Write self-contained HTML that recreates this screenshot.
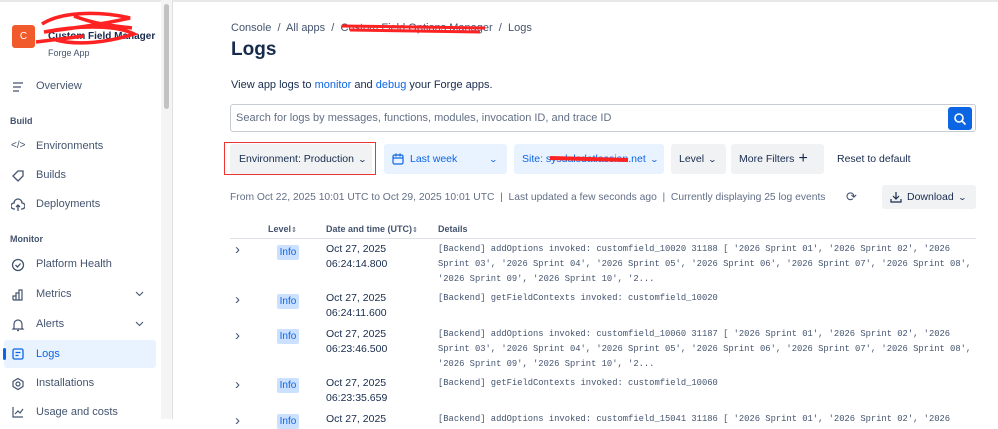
<!DOCTYPE html>
<html><head><meta charset="utf-8"><style>
*{box-sizing:border-box;margin:0;padding:0}
body{width:998px;height:419px;overflow:hidden;background:#fff;font-family:"Liberation Sans",sans-serif;color:#172b4d;position:relative;font-size:12px}
.a{position:absolute;white-space:nowrap}
.nav{left:36px;font-size:11px;color:#44546f}
.ic{left:11px;width:14px;height:14px}
.sec{left:10px;font-size:9px;font-weight:bold;color:#44546f}
.btn{position:absolute;top:144px;height:30px;border-radius:3px;background:#f1f2f4;font-size:10.5px;color:#172b4d;display:flex;align-items:center;padding:0 8px;white-space:nowrap}
.blue{background:#e9f2ff;color:#0c66e4}
.mono{font-family:"Liberation Mono",monospace;font-size:8.8px;color:#44546f;line-height:15px;left:438px;white-space:pre}
.info{position:absolute;left:277px;width:22px;height:15px;background:#cce0ff;color:#0c66e4;font-size:10px;text-align:center;line-height:15px;border-radius:2px}
.dt{left:326px;font-size:10.5px;color:#172b4d;line-height:15px}
.chev{left:235px;font-size:15px;color:#44546f;line-height:12px}
.cv{font-size:8px;margin-left:5px;display:inline-block;transform:scaleX(1.4)}
</style></head><body>
<div class="a" style="left:0;top:0;width:998px;height:2px;background:#e8e8e8"></div>
<!-- sidebar -->
<div class="a" style="left:12px;top:25px;width:23px;height:23px;background:#f15b2c;border-radius:3px;color:#fff;font-size:10px;text-align:center;line-height:23px">C</div>
<div class="a" style="left:48px;top:31px;font-size:10px;font-weight:bold;color:#172b4d">Custom Field Manager</div>
<div class="a" style="left:48px;top:48px;font-size:9px;color:#44546f">Forge App</div>
<svg class="a" style="left:34px;top:6px" width="110" height="44"><path d="M8 18 C30 4,70 6,96 12 C70 18,40 22,10 26 C40 20,80 18,100 28 C75 36,45 40,22 34 M2 36 L50 30 M40 10 C60 18,80 20,98 22" stroke="#f22" stroke-width="3.5" fill="none"/></svg>
<svg class="a ic" style="top:80px" viewBox="0 0 14 14"><path d="M2 3h10M2 7h8M2 11h6" stroke="#44546f" stroke-width="1.3"/></svg>
<div class="a nav" style="top:80px">Overview</div>
<div class="a sec" style="top:116px">Build</div>
<div class="a ic" style="top:140px;font-size:10px;color:#44546f">&lt;/&gt;</div>
<div class="a nav" style="top:140px">Environments</div>
<svg class="a ic" style="top:169px" viewBox="0 0 14 14"><path d="M2 7l5-5h5v5l-5 5z" stroke="#44546f" stroke-width="1.3" fill="none"/></svg>
<div class="a nav" style="top:169px">Builds</div>
<svg class="a ic" style="top:198px" viewBox="0 0 14 14"><path d="M4 11H3a3 3 0 010-6 4 4 0 018 0 3 3 0 010 6h-1M7 13V7M5 9l2-2 2 2" stroke="#44546f" stroke-width="1.3" fill="none"/></svg>
<div class="a nav" style="top:198px">Deployments</div>
<div class="a sec" style="top:234px">Monitor</div>
<svg class="a ic" style="top:258px" viewBox="0 0 14 14"><circle cx="7" cy="7" r="5.5" stroke="#44546f" stroke-width="1.3" fill="none"/><path d="M4.5 7l2 2 3-3.5" stroke="#44546f" stroke-width="1.3" fill="none"/></svg>
<div class="a nav" style="top:258px">Platform Health</div>
<svg class="a ic" style="top:288px" viewBox="0 0 14 14"><path d="M2 12V8h3v4M5 12V5h3v7M8 12V2h3v10H2" stroke="#44546f" stroke-width="1.2" fill="none"/></svg>
<div class="a nav" style="top:288px">Metrics</div>
<svg class="a" style="left:135px;top:291px" width="9" height="6"><path d="M1 1l3.5 3.5L8 1" stroke="#44546f" stroke-width="1.1" fill="none"/></svg>
<svg class="a ic" style="top:318px" viewBox="0 0 14 14"><path d="M3 10V6a4 4 0 018 0v4l1 1H2zM6 12.5h2" stroke="#44546f" stroke-width="1.2" fill="none"/></svg>
<div class="a nav" style="top:318px">Alerts</div>
<svg class="a" style="left:135px;top:321px" width="9" height="6"><path d="M1 1l3.5 3.5L8 1" stroke="#44546f" stroke-width="1.1" fill="none"/></svg>
<div class="a" style="left:4px;top:340px;width:152px;height:28px;background:#e9f2ff;border-radius:3px"></div>
<div class="a" style="left:3px;top:348px;width:3px;height:12px;background:#0c66e4;border-radius:2px"></div>
<svg class="a ic" style="top:347px" viewBox="0 0 14 14"><rect x="2" y="2" width="10" height="10" rx="1.5" stroke="#0c66e4" stroke-width="1.3" fill="none"/><path d="M4.5 5.5h5M4.5 8.5h3" stroke="#0c66e4" stroke-width="1.2"/></svg>
<div class="a nav" style="top:348px;color:#0c66e4">Logs</div>
<svg class="a ic" style="top:377px" viewBox="0 0 14 14"><path d="M7 1.5l5 3v5l-5 3-5-3v-5z" stroke="#44546f" stroke-width="1.2" fill="none"/><circle cx="7" cy="7" r="2" stroke="#44546f" stroke-width="1.2" fill="none"/></svg>
<div class="a nav" style="top:377px">Installations</div>
<svg class="a ic" style="top:405px" viewBox="0 0 14 14"><path d="M2 2v10h10M4 9l3-3 2 2 3-4" stroke="#44546f" stroke-width="1.2" fill="none"/></svg>
<div class="a nav" style="top:406px">Usage and costs</div>
<div class="a" style="left:161px;top:0;width:12px;height:419px;background:#f4f4f4;border-right:1px solid #e0e0e0"></div>
<div class="a" style="left:164px;top:4px;width:5px;height:105px;background:#c2c2c2;border-radius:3px"></div>
<!-- main -->
<div class="a" style="left:231px;top:22px;font-size:11px;color:#44546f">Console &nbsp;/&nbsp; All apps &nbsp;/&nbsp; Custom Field Options Manager &nbsp;/&nbsp; Logs</div>
<svg class="a" style="left:340px;top:20px" width="150" height="16"><path d="M2 6 L145 8 M10 10 L140 12" stroke="#f22" stroke-width="3"/></svg>
<div class="a" style="left:231px;top:39px;font-size:19px;font-weight:bold">Logs</div>
<div class="a" style="left:231px;top:79px;font-size:11px">View app logs to <span style="color:#0c66e4">monitor</span> and <span style="color:#0c66e4">debug</span> your Forge apps.</div>
<div class="a" style="left:230px;top:104px;width:746px;height:28px;border:1px solid #c7ccd3;border-radius:3px"></div>
<div class="a" style="left:236px;top:112px;font-size:11px;color:#626f86">Search for logs by messages, functions, modules, invocation ID, and trace ID</div>
<div class="a" style="left:948px;top:107px;width:24px;height:23px;background:#0c66e4;border-radius:3px"></div>
<svg class="a" style="left:953px;top:112px" width="14" height="14"><circle cx="6" cy="6" r="4" stroke="#fff" stroke-width="1.6" fill="none"/><path d="M9 9l3.5 3.5" stroke="#fff" stroke-width="1.6"/></svg>
<div class="a" style="left:224px;top:142px;width:152px;height:33px;border:1.5px solid #e33"></div>
<div class="btn" style="left:230px;width:142px;padding:0 6px 0 9px">Environment: Production<span class="cv">&#8964;</span></div>
<div class="btn blue" style="left:384px;width:123px"><svg width="12" height="12" style="margin-right:6px"><rect x="1" y="2" width="10" height="9" rx="1.5" stroke="#0c66e4" stroke-width="1.2" fill="none"/><path d="M1 5h10M4 0.5v3M8 0.5v3" stroke="#0c66e4" stroke-width="1.2"/></svg>Last week<span class="cv" style="position:absolute;right:10px">&#8964;</span></div>
<div class="btn blue" style="left:514px;width:150px">Site: sysdalsdatlassian.net<span class="cv">&#8964;</span></div>
<svg class="a" style="left:548px;top:150px" width="85" height="18"><path d="M2 8 L80 10" stroke="#f22" stroke-width="4"/></svg>
<div class="btn" style="left:671px;width:55px">Level<span class="cv">&#8964;</span></div>
<div class="btn" style="left:731px;width:93px">More Filters <span style="margin-left:4px;font-size:16px;font-weight:300">+</span></div>
<div class="a" style="left:837px;top:153px;font-size:10.5px">Reset to default</div>
<div class="a" style="left:230px;top:192px;font-size:10.3px;color:#626f86">From Oct 22, 2025 10:01 UTC to Oct 29, 2025 10:01 UTC &nbsp;| &nbsp;Last updated a few seconds ago &nbsp;| &nbsp;Currently displaying 25 log events</div>
<div class="a" style="left:846px;top:189px;font-size:13px;color:#44546f">&#10227;</div>
<div class="btn" style="left:882px;top:185px;height:24px;width:94px"><svg width="12" height="12" style="margin-right:5px"><path d="M6 1v7M3 5l3 3 3-3M1 8v3h10V8" stroke="#172b4d" stroke-width="1.2" fill="none"/></svg>Download<span class="cv">&#8964;</span></div>
<div class="a" style="left:268px;top:224px;font-size:9px;font-weight:bold;color:#44546f">Level<span style="font-weight:normal;font-size:7px">&#8661;</span></div>
<div class="a" style="left:326px;top:224px;font-size:9px;font-weight:bold;color:#44546f">Date and time (UTC)<span style="font-weight:normal;font-size:7px">&#8661;</span></div>
<div class="a" style="left:438px;top:224px;font-size:9px;font-weight:bold;color:#44546f">Details</div>
<div class="a" style="left:230px;top:238px;width:746px;height:1px;background:#dfe1e6"></div>

<div class="a chev" style="top:244px">&#8250;</div><div class="info" style="top:245px">Info</div>
<div class="a dt" style="top:242px">Oct 27, 2025<br>06:24:14.800</div>
<div class="a mono" style="top:242px">[Backend] addOptions invoked: customfield_10020 31188 [ '2026 Sprint 01', '2026 Sprint 02', '2026
Sprint 03', '2026 Sprint 04', '2026 Sprint 05', '2026 Sprint 06', '2026 Sprint 07', '2026 Sprint 08',
'2026 Sprint 09', '2026 Sprint 10', '2...</div>

<div class="a chev" style="top:294px">&#8250;</div><div class="info" style="top:294px">Info</div>
<div class="a dt" style="top:291px">Oct 27, 2025<br>06:24:11.600</div>
<div class="a mono" style="top:291px">[Backend] getFieldContexts invoked: customfield_10020</div>

<div class="a chev" style="top:330px">&#8250;</div><div class="info" style="top:329px">Info</div>
<div class="a dt" style="top:327px">Oct 27, 2025<br>06:23:46.500</div>
<div class="a mono" style="top:327px">[Backend] addOptions invoked: customfield_10060 31187 [ '2026 Sprint 01', '2026 Sprint 02', '2026
Sprint 03', '2026 Sprint 04', '2026 Sprint 05', '2026 Sprint 06', '2026 Sprint 07', '2026 Sprint 08',
'2026 Sprint 09', '2026 Sprint 10', '2...</div>

<div class="a chev" style="top:379px">&#8250;</div><div class="info" style="top:378px">Info</div>
<div class="a dt" style="top:376px">Oct 27, 2025<br>06:23:35.659</div>
<div class="a mono" style="top:376px">[Backend] getFieldContexts invoked: customfield_10060</div>

<div class="a chev" style="top:415px">&#8250;</div><div class="info" style="top:414px">Info</div>
<div class="a dt" style="top:412px">Oct 27, 2025</div>
<div class="a mono" style="top:412px">[Backend] addOptions invoked: customfield_15041 31186 [ '2026 Sprint 01', '2026 Sprint 02', '2026</div>
</body></html>
